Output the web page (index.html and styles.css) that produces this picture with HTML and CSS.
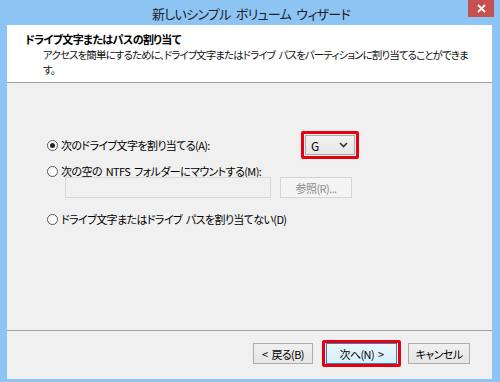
FILE: index.html
```html
<!DOCTYPE html>
<html lang="ja">
<head>
    <meta charset="UTF-8">
    <title>新しいシンプル ボリューム ウィザード</title>
    <link rel="stylesheet" href="styles.css">
</head>
<body>
    <div class="window">
        <div class="titlebar">
            <span class="title">新しいシンプル ボリューム ウィザード</span>
            <span class="close">
                <svg width="9" height="9" viewBox="0 0 9 9">
                    <path d="M1 1 L8 8 M8 1 L1 8" stroke="#fff" stroke-width="1.8"/>
                </svg>
            </span>
        </div>
        <div class="content">
            <div class="header">
                <div class="header-title">ドライブ文字またはパスの割り当て</div>
                <div class="header-desc">アクセスを簡単にするために、ドライブ文字またはドライブ パスをパーティションに割り当てることができま<br>す。</div>
            </div>

            <div class="main">
                <div class="row">
                    <label class="radio"><span class="dot checked"></span>次のドライブ文字を割り当てる(A):</label>
                    <div class="highlight select-wrap">
                        <div class="select">
                            <span>G</span>
                            <svg width="9" height="6" viewBox="0 0 9 6">
                                <path d="M1 1 L4.5 4.5 L8 1" stroke="#333" stroke-width="1.6" fill="none"/>
                            </svg>
                        </div>
                    </div>
                </div>
                <label class="radio second"><span class="dot"></span>次の空の NTFS フォルダーにマウントする(M):</label>
                <div class="mount">
                    <div class="textbox"></div>
                    <div class="btn disabled">参照(R)...</div>
                </div>
                <label class="radio third"><span class="dot"></span>ドライブ文字またはドライブ パスを割り当てない(D)</label>
            </div>

            <div class="footer">
                <div class="btn">&lt; 戻る(B)</div>
                <div class="highlight next-wrap">
                    <div class="btn primary">次へ(N) &gt;</div>
                </div>
                <div class="btn cancel">キャンセル</div>
            </div>
        </div>
    </div>
</body>
</html>
```

FILE: styles.css
```css
body {
    margin: 0;
    font-family: "Noto Sans CJK JP", "Noto Sans", sans-serif;
    font-size: 11px;
    font-feature-settings: "palt";
    letter-spacing: -0.6px;
    word-spacing: 2px;
    color: #000;
}

.window {
    width: 500px;
    height: 382px;
    box-sizing: border-box;
    background-color: #8cc4f4;
    padding: 0 8px 3px 7px;
    display: flex;
    flex-direction: column;
}

.titlebar {
    height: 25px;
    flex-shrink: 0;
    position: relative;
    display: flex;
    justify-content: center;
    align-items: center;
}

.title {
    font-size: 13px;
    letter-spacing: -0.7px;
    word-spacing: 3px;
    color: #222;
    margin-top: 1px;
    margin-left: 3px;
}

.close {
    position: absolute;
    right: -2px;
    top: 0;
    width: 26px;
    height: 17px;
    background-color: #c75050;
    display: flex;
    align-items: center;
    justify-content: center;
}

.content {
    flex: 1;
    background-color: #f0f0f0;
    display: flex;
    flex-direction: column;
}

.header {
    height: 58px;
    flex-shrink: 0;
    background-color: #fff;
    border-bottom: 1px solid #a0a0a0;
    padding: 7px 0 0 18px;
    box-sizing: border-box;
}

.header-title {
    font-weight: bold;
    line-height: 15px;
}

.header-desc {
    margin-left: 18px;
    font-size: 10.5px;
    line-height: 15px;
    letter-spacing: -0.9px;
    white-space: nowrap;
    color: #111;
}

.main {
    flex: 1;
    border-bottom: 1px solid #a0a0a0;
    padding: 48px 0 0 40px;
    display: flex;
    flex-direction: column;
}

.row {
    display: flex;
    align-items: center;
}

.row .radio {
    width: 254px;
}

.radio {
    display: flex;
    align-items: center;
    line-height: 16px;
    white-space: nowrap;
}

.dot {
    width: 11px;
    height: 11px;
    border: 1px solid #555;
    border-radius: 50%;
    background-color: #fff;
    margin-right: 3px;
    box-sizing: border-box;
    position: relative;
}

.dot.checked::after {
    content: "";
    position: absolute;
    left: 2px;
    top: 2px;
    width: 5px;
    height: 5px;
    border-radius: 50%;
    background-color: #222;
}

.highlight {
    border: 3px solid #e60012;
    border-radius: 2px;
}

.select-wrap {
    padding: 1px;
}

.select {
    width: 50px;
    height: 20px;
    box-sizing: border-box;
    border: 1px solid #acacac;
    background: linear-gradient(#f2f2f2, #e5e5e5);
    display: flex;
    align-items: center;
    justify-content: space-between;
    padding: 0 6px 0 5px;
    font-size: 12px;
}

.second {
    margin-top: 4px;
}

.mount {
    display: flex;
    align-items: center;
    margin: -2px 0 0 18px;
}

.textbox {
    width: 206px;
    height: 21px;
    box-sizing: border-box;
    border: 1px solid #d9d9d9;
    background-color: #f0f0f0;
}

.btn {
    height: 21px;
    box-sizing: border-box;
    border: 1px solid #acacac;
    background: linear-gradient(#f0f0f0, #e5e5e5);
    display: flex;
    align-items: center;
    justify-content: center;
    white-space: nowrap;
}

.mount .btn {
    width: 72px;
    margin-left: 9px;
}

.btn.disabled {
    color: #8d8d8d;
    border-color: #d5d5d5;
    background: #f4f4f4;
}

.third {
    margin-top: 13px;
}

.footer {
    height: 48px;
    display: flex;
    align-items: center;
    padding-left: 246px;
    padding-bottom: 3px;
    box-sizing: border-box;
}

.footer .btn {
    width: 60px;
}

.next-wrap {
    margin-left: 9px;
    padding: 0 1px;
}

.btn.primary {
    width: 71px;
    border-color: #3c7fb1;
    background: linear-gradient(#eaf6fd, #d9effc);
}

.btn.cancel {
    width: 62px;
    margin-left: 7px;
}
```
